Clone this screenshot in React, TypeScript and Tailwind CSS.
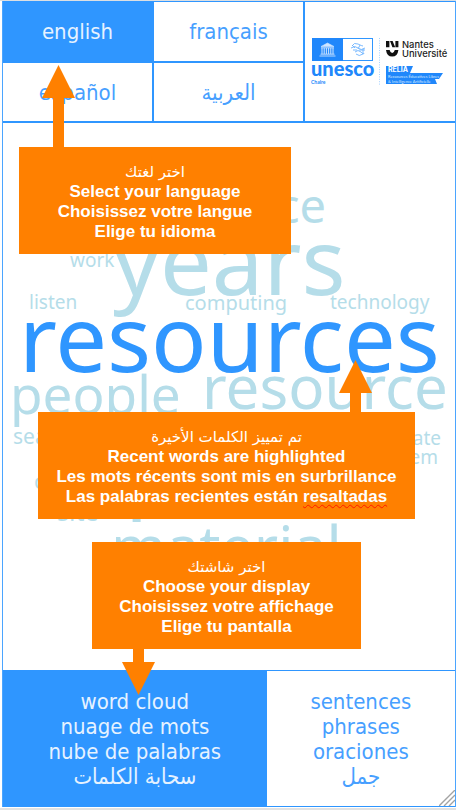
import type { ReactNode } from "react";

type Word = { text: string; size: number; baseline: number; left?: number; right?: number; recent?: boolean };

// Positions are on the cloud's own canvas, which is 452 pixels wide.
const words: Word[] = [
  { text: "science", size: 47, baseline: 101, right: 129 },
  { text: "years", size: 92, baseline: 173, left: 110 },
  { text: "work", size: 19, baseline: 145, left: 67 },
  { text: "listen", size: 19, baseline: 187, left: 26 },
  { text: "computing", size: 20, baseline: 188, left: 182 },
  { text: "technology", size: 19, baseline: 187, left: 327 },
  { text: "people", size: 53, baseline: 291, left: 7 },
  { text: "resource", size: 60, baseline: 286, left: 199 },
  { text: "search", size: 21, baseline: 322, left: 10 },
  { text: "climate", size: 19, baseline: 323, right: 14 },
  { text: "system", size: 19, baseline: 342, right: 17 },
  { text: "course", size: 22, baseline: 366, left: 31 },
  { text: "site", size: 25, baseline: 398, left: 54 },
  { text: "place", size: 90, baseline: 377, left: 122 },
  { text: "material", size: 59, baseline: 445, left: 108 },
  { text: "resources", size: 92, baseline: 250, left: 16, recent: true },
];

function WordCloud() {
  return (
    <div className="absolute inset-0 overflow-hidden">
      <div className="relative mx-auto h-full w-[452px] font-['Noto_Sans','Open_Sans',sans-serif] leading-none">
        {words.map((w) => (
          <span
            key={w.text}
            className={`absolute whitespace-nowrap ${w.recent ? "text-[#2f96ff]" : "text-[#b5dde9]"}`}
            style={{ fontSize: w.size, top: w.baseline - Math.round(w.size * 0.888), left: w.left, right: w.right }}
          >
            {w.text}
          </span>
        ))}
      </div>
    </div>
  );
}

function Arrow({ className, length }: { className: string; length: number }) {
  return (
    <svg className={`absolute ${className}`} width="33" height={length} viewBox={`0 0 33 ${length}`} fill="#ff8000" aria-hidden="true">
      <path d={`M16.5 0 L33 33 H22 V${length} H11 V33 H0 Z`} />
    </svg>
  );
}

function Callout({ className, arabic, children }: { className: string; arabic: string; children: ReactNode }) {
  return (
    <div className={`absolute z-10 flex h-[107px] flex-col items-center justify-center whitespace-nowrap bg-[#ff8000] pt-[3px] text-center font-['Liberation_Sans',Arial,sans-serif] text-[17px] font-bold leading-[20px] text-white ${className}`}>
      <p dir="rtl" lang="ar" className="font-['DejaVu_Sans',sans-serif] text-[15px] font-normal leading-[20px]">
        {arabic}
      </p>
      {children}
    </div>
  );
}

function Logos() {
  return (
    <svg width="138" height="50" viewBox="0 0 138 50" role="img" aria-label="unesco Chaire, Nantes Université, RELIA">
      <rect x="1.5" y="1.5" width="60" height="22" fill="#fff" stroke="#2f96ff" />
      <rect x="1" y="1" width="31" height="23" fill="#2087fb" />
      <g fill="none" stroke="#cfe5ff">
        <path d="M10 9.5 L16.5 6 L23 9.5 Z" fill="#cfe5ff" strokeWidth="0.6" />
        <path d="M10 10.8 H23 M9.5 17.2 H23.5 M8.5 19 H24.5" strokeWidth="0.9" />
        <path d="M11 11 V17 M13.2 11 V17 M15.4 11 V17 M17.6 11 V17 M19.8 11 V17 M22 11 V17" strokeWidth="1" />
      </g>
      <g fill="none" stroke="#6cb2ff" strokeWidth="0.9">
        <path d="M41 9 Q43 5 47 7 T52 9 M40 11 Q44 8 47 11 T54 11 M42 13 H46 M48 13 H54 M44 15 Q47 12 50 15 T53 16 M45 17 Q48 20 52 17" />
        <path d="M41 8 L44 11 M49 8 L47 12 M52 12 V17" />
      </g>
      <text x="0" y="39" fill="#2087fb" fontFamily="Lato, sans-serif" fontWeight="900" fontSize="20">unesco</text>
      <text x="0" y="47" fill="#2087fb" fontFamily="Lato, sans-serif" fontWeight="700" fontSize="5">Chaire</text>
      <path d="M68.5 1 V48" stroke="#8ec5ff" strokeWidth="0.8" strokeDasharray="1 1.4" />
      <g fill="#111">
        <path d="M75 4 H78.4 V10.2 H75 Z M79 4 H81.6 L84.2 10.2 H81.4 Z M84.4 4 H87.4 V10.2 H84.4 Z" />
        <path d="M75 13 H78.6 Q79.4 16 81.2 16 Q83 16 83.8 13 H87.4 Q86.6 19.6 81.2 19.6 Q75.8 19.6 75 13 Z" />
      </g>
      <g fill="#222" fontFamily="Inter, sans-serif" fontWeight="500" fontSize="9.4">
        <text x="91" y="11">Nantes</text>
        <text x="91" y="20">Université</text>
      </g>
      <path d="M75 29 H102 L99 36 H132 L128 42 H124 L126 47 H75 Z" fill="#2087fb" />
      <text x="77" y="35" fill="#fff" fontFamily="Inter, sans-serif" fontWeight="700" fontSize="7">RELIA</text>
      <g fill="#d5e9ff" fontFamily="Lato, sans-serif" fontSize="4">
        <text x="77" y="40.6">Ressources Éducatives Libres</text>
        <text x="77" y="45.6">&amp; Intelligence Artificielle</text>
      </g>
    </svg>
  );
}

const languages = [
  { label: "english", code: "en", active: true },
  { label: "français", code: "fr", active: false },
  { label: "español", code: "es", active: false },
  { label: "العربية", code: "ar", active: false },
];

const displays = [
  { lines: ["word cloud", "nuage de mots", "nube de palabras"], arabic: "سحابة الكلمات", active: true },
  { lines: ["sentences", "phrases", "oraciones"], arabic: "جمل", active: false },
];

export default function App() {
  return (
    <div className="flex min-h-screen flex-col border-b-2 border-t border-b-[#e2e2e2] border-t-[#dcdfe2] bg-white pb-px pl-0.5 font-['DejaVu_Sans_Condensed','DejaVu_Sans',sans-serif] text-[22px] leading-[25px]">
      <div className="flex flex-1 flex-col border-x border-[#4ba5ff]">
        <header className="grid grid-cols-[2fr_1fr] gap-0.5 border-b-2 border-t border-[#2f96ff] bg-[#2f96ff]">
          <nav className="grid grid-cols-2 grid-rows-[59px_58px] gap-0.5">
            {languages.map((l) => (
              <button
                key={l.code}
                type="button"
                lang={l.code}
                aria-pressed={l.active}
                className={`${l.active ? "bg-[#2f96ff] text-[#e6f2ff]" : "bg-white text-[#479fff]"}`}
              >
                {l.label}
              </button>
            ))}
          </nav>
          <div className="flex items-center justify-center bg-white">
            <Logos />
          </div>
        </header>

        <main className="relative flex-1">
          <WordCloud />
          <Callout className="left-4 top-6 w-[272px]" arabic="اختر لغتك">
            <Arrow className="left-[23px] top-[-82px]" length={83} />
            <p>Select your language</p>
            <p>Choisissez votre langue</p>
            <p>Elige tu idioma</p>
          </Callout>
          <Callout className="left-[35px] top-[289px] w-[377px]" arabic="تم تمييز الكلمات الأخيرة">
            <Arrow className="left-[301px] top-[-52px]" length={53} />
            <p>Recent words are highlighted</p>
            <p>Les mots récents sont mis en surbrillance</p>
            <p>
              Las palabras recientes están{" "}
              <span className="underline decoration-[#ff1a00] decoration-wavy decoration-1 underline-offset-2">resaltadas</span>
            </p>
          </Callout>
          <Callout className="left-[89px] top-[419px] w-[269px]" arabic="اختر شاشتك">
            <Arrow className="left-[30px] top-[106px] rotate-180" length={47} />
            <p>Choose your display</p>
            <p>Choisissez votre affichage</p>
            <p>Elige tu pantalla</p>
          </Callout>
        </main>

        <footer className="relative grid grid-cols-[7fr_5fr] border-y border-[#2f96ff]">
          {displays.map((d) => (
            <button
              key={d.arabic}
              type="button"
              aria-pressed={d.active}
              className={`flex h-[135px] flex-col items-center justify-center ${d.active ? "bg-[#2f96ff] text-[#e6f2ff]" : "bg-white text-[#479fff]"}`}
            >
              {d.lines.map((line) => (
                <span key={line}>{line}</span>
              ))}
              <span lang="ar" dir="rtl">{d.arabic}</span>
            </button>
          ))}
          <svg className="absolute bottom-0 right-0" width="16" height="16" viewBox="0 0 16 16" stroke="#a3a3a3" strokeWidth="1.4" aria-hidden="true">
            <path d="M0 16 L16 0 M5 16 L16 5 M10 16 L16 10" />
          </svg>
        </footer>
      </div>
    </div>
  );
}
